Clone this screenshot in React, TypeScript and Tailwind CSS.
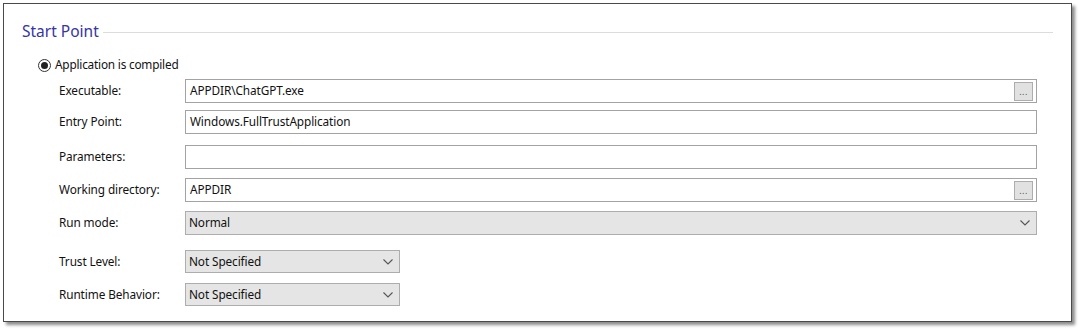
import React from "react";

const font = { fontFamily: '"Noto Sans", "Open Sans", Arial, sans-serif' };

function Chevron() {
  return (
    <svg width="10" height="6" viewBox="0 0 10 6" className="shrink-0">
      <path d="M0.5 0.5 L5 5 L9.5 0.5" fill="none" stroke="#555" strokeWidth="1.1" />
    </svg>
  );
}

function TextBox({ value, browse }: { value: string; browse?: boolean }) {
  return (
    <div className="flex-1 h-[24px] flex items-center border border-[#a3a3a3] bg-white pl-[4px] pr-[3px]">
      <span className="flex-1 text-[11.8px] tracking-[-0.1px] text-[#111]">{value}</span>
      {browse && (
        <div className="w-[19px] h-[19px] border border-[#adadad] bg-[#e1e1e1] flex items-end justify-center pb-[4px]">
          <span className="text-[9px] leading-none text-[#555] tracking-[0.5px]">...</span>
        </div>
      )}
    </div>
  );
}

function Combo({ value, wide }: { value: string; wide?: boolean }) {
  return (
    <div
      className={`${wide ? "flex-1 h-[24px]" : "w-[215px] h-[23px]"} flex items-center border border-[#adadad] bg-[#e5e5e5] pl-[3px] pr-[6px]`}
    >
      <span className="flex-1 text-[11.8px] tracking-[-0.1px] text-[#111]">{value}</span>
      <Chevron />
    </div>
  );
}

function Row({ label, children, mt }: { label: string; children: React.ReactNode; mt: string }) {
  return (
    <div className={`flex items-center pl-[55px] pr-[34px] ${mt}`}>
      <span className="w-[126px] text-[11.8px] tracking-[-0.1px] text-[#111]">{label}</span>
      {children}
    </div>
  );
}

export default function App() {
  return (
    <div className="w-[1080px] h-[332px] bg-white" style={font}>
      <div className="ml-[3px] mt-[3px] w-[1069px] h-[319px] border border-[#4a4a4a] bg-white shadow-[3px_3px_3px_rgba(0,0,0,0.45)] flex flex-col">
        <div className="mt-[18px] h-[20px] flex items-center pl-[18px] pr-[18px] gap-[4px]">
          <span className="text-[15.5px] text-[#3535a6] leading-none">Start Point</span>
          <div className="flex-1 h-px bg-[#dcdcdc]" />
        </div>
        <div className="mt-[15px] h-[16px] flex items-center pl-[34px] gap-[4px]">
          <div className="w-[13px] h-[13px] rounded-full border border-[#333] bg-white flex items-center justify-center">
            <div className="w-[7px] h-[7px] rounded-full bg-[#222]" />
          </div>
          <span className="text-[11.8px] tracking-[-0.2px] text-[#111]">Application is compiled</span>
        </div>
        <Row label="Executable:" mt="mt-[6px]">
          <TextBox value="APPDIR\ChatGPT.exe" browse />
        </Row>
        <Row label="Entry Point:" mt="mt-[7px]">
          <TextBox value="Windows.FullTrustApplication" />
        </Row>
        <Row label="Parameters:" mt="mt-[11px]">
          <TextBox value="" />
        </Row>
        <Row label="Working directory:" mt="mt-[9px]">
          <TextBox value="APPDIR" browse />
        </Row>
        <Row label="Run mode:" mt="mt-[9px]">
          <Combo value="Normal" wide />
        </Row>
        <Row label="Trust Level:" mt="mt-[15px]">
          <Combo value="Not Specified" />
        </Row>
        <Row label="Runtime Behavior:" mt="mt-[10px]">
          <Combo value="Not Specified" />
        </Row>
      </div>
    </div>
  );
}
